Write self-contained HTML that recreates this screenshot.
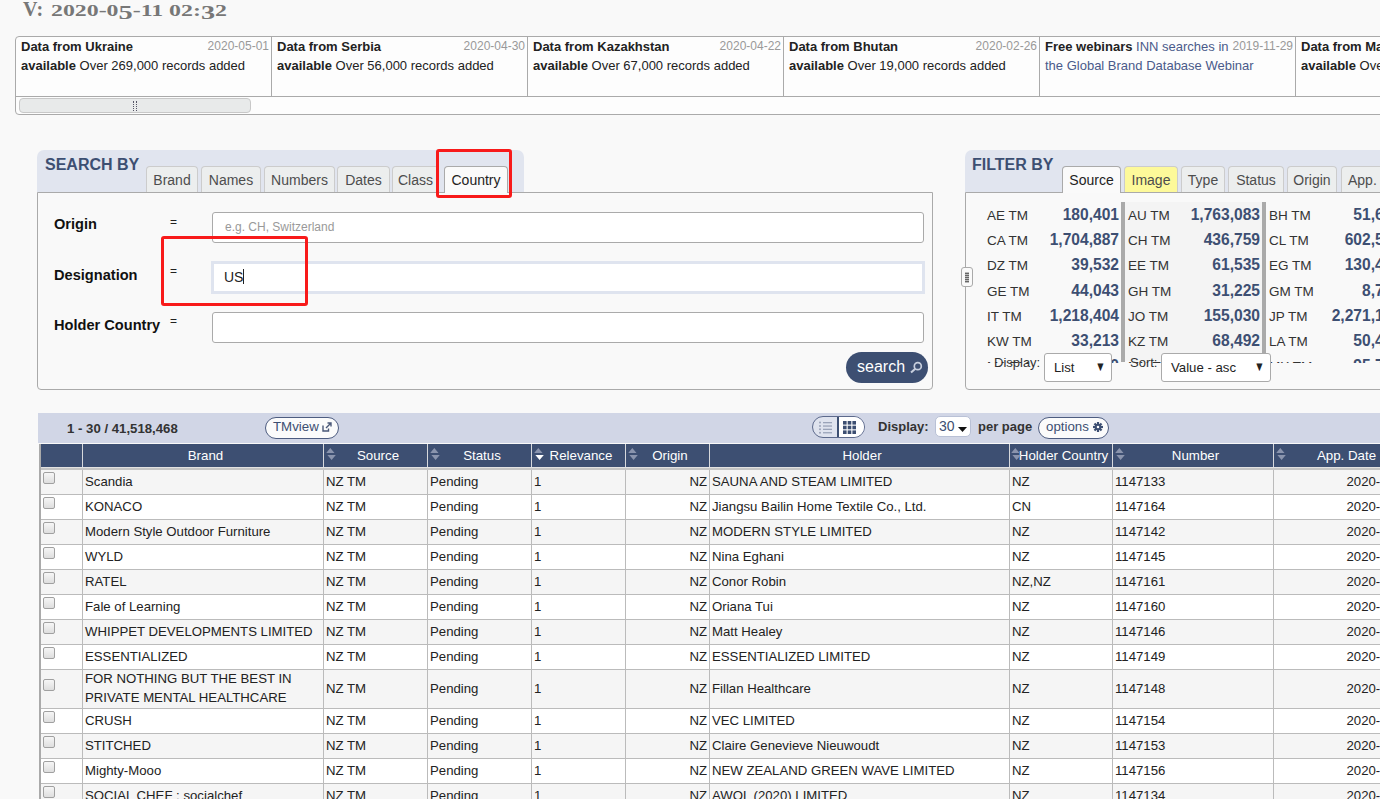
<!DOCTYPE html>
<html><head><meta charset="utf-8">
<style>
*{box-sizing:border-box;margin:0;padding:0}
html,body{width:1380px;height:799px;overflow:hidden;background:#f9f9f9;font-family:"Liberation Sans",sans-serif;color:#222;font-size:13px}
.abs{position:absolute}
#title{left:0;top:0;width:240px;height:24px;font-family:"Liberation Serif",serif;font-weight:bold;color:#777;white-space:nowrap}
#title .tv{position:absolute;left:23px;top:-1px;font-size:20px;line-height:20px;letter-spacing:1px}
#title .td{position:absolute;left:51px;top:2px;font-size:16px;line-height:16px;display:inline-block;transform:scaleX(1.49);transform-origin:0 0}
#title .td i{font-style:normal;position:relative;top:3px;font-size:19px}
/* news */
#news{left:15px;top:36px;width:1400px;height:79px;border:1px solid #aaa;border-radius:4px;background:#fdfdfd;overflow:hidden}
#news .items{position:absolute;left:0;top:0;height:60px;border-bottom:1px solid #aaa;width:1400px}
#news .it{position:absolute;top:0;width:256px;height:59px;border-right:1px solid #aaa;padding:0 0 0 5px;line-height:19.3px;white-space:nowrap}
#news .it b{font-weight:bold;color:#222}
#news .dt{position:absolute;right:2px;top:0;color:#999;font-size:12px}
#news a{color:#4a5a8a;text-decoration:none}
#news .thumb{position:absolute;left:3px;top:61px;width:232px;height:15px;border:1px solid #c8c8c8;border-radius:4px;background:#e8eaea}
#news .grip{position:absolute;left:113px;top:2px;width:4px;height:10px;border-left:1px dotted #556;border-right:1px dotted #556}
/* panels */
.phead{position:absolute;background:#e1e5ef;border-radius:7px 7px 0 0}
.phead h2{position:absolute;left:8px;top:6px;font-size:16px;font-weight:bold;color:#3d4f72;white-space:nowrap}
.tab{position:absolute;top:16px;height:26px;border:1px solid #ccc;border-bottom:none;border-radius:4px 4px 0 0;background:#eceeee;color:#4d4d4d;font-size:14px;text-align:center;line-height:27px;white-space:nowrap}
.tab.act{background:#fafafa;color:#222;height:27px;border-color:#aaa;z-index:2}
.pbody{position:absolute;border:1px solid #aaa;border-radius:0 0 4px 4px;background:#f9f9f9}
.lbl{position:absolute;font-size:14.6px;font-weight:bold;color:#111;white-space:nowrap}
.eq{position:absolute;font-size:12px;color:#222;margin-left:-2px}
.inp{position:absolute;left:174px;width:712px;height:30px;border:1px solid #aaa;border-radius:3px;background:#fff;font-size:12px;color:#999;padding:7px 0 0 12px}
.inp.foc{border:3px solid #dfe4ef;border-radius:0;color:#222;font-size:14px;padding:5px 0 0 10px}
.redbox{position:absolute;z-index:5;border:3px solid #f81a1a;border-radius:3px}
#sbtn{position:absolute;background:#3d4f72;color:#fff;border-radius:16px;font-size:16px;white-space:nowrap}
/* filter grid */
.fl{position:absolute;font-size:14px;color:#333;white-space:nowrap}
.fv{position:absolute;font-size:15px;font-weight:bold;color:#3d4f72;text-align:right;white-space:nowrap}
.sel{position:absolute;z-index:3;background:#fff;border:1px solid #aaa;border-radius:3px;font-size:13.2px;color:#222;padding:0 0 0 9px;line-height:28px;white-space:nowrap}
.sel i{position:absolute;right:4px;top:-1px;font-style:normal;font-size:13px;transform:scaleX(.8)}
/* results */
#tbar{left:38px;top:413px;width:1342px;height:30px;background:#d1d6e6}
#tbl{position:absolute;left:40px;top:443px;border-collapse:collapse;table-layout:fixed;background:#fff}
#tbl th{background:#3d4f72;color:#fff;font-weight:normal;font-size:14px;height:25px;border-left:1px solid #dfe3ea;border-top:1px solid #fff;position:relative;white-space:nowrap;overflow:hidden}
#tbl td{font-size:13px;color:#222;border:1px solid #bbb;height:25px;padding:0 2px;vertical-align:middle;white-space:nowrap;overflow:hidden}
#tbl tr:nth-child(odd) td{background:#f3f3f3}

.r{position:absolute;left:41px;width:1380px;border-bottom:1px solid #bbb;background:#fff}
.r.g{background:#f5f5f5}
.c{position:absolute;top:0;bottom:0;border-left:1px solid #bbb;padding:0 0 2px 2px;display:flex;align-items:center;line-height:19px;font-size:13.2px;color:#222;white-space:nowrap;overflow:hidden}

.c.rt{justify-content:flex-end;padding:0 2px 2px 0}
.cb{position:absolute;left:2px;top:2px;width:12px;height:12px;border:1px solid #a0a0a0;border-radius:2px;background:linear-gradient(#f6f6f6,#dedede)}
.t2 .cb{top:9px}
.c0{border-left:none}
#thead{position:absolute;left:41px;top:444px;width:1380px;height:26px;background:#3d4f72;border-bottom:3px solid #c4c4c4}
#thead:after{content:"";position:absolute;left:0;right:0;top:23px;height:1px;background:#e2e2e2}
.h{position:absolute;top:0;height:23px;border-left:1px solid #d6d8dc;color:#fff;font-size:13.3px;text-align:center;line-height:23px;white-space:nowrap;padding-left:5px}
.h .so{position:absolute;left:2px;top:4px}
#lborder{position:absolute;left:39px;top:444px;width:2px;height:360px;background:#aaa}

#fgrid{position:absolute;left:984px;top:202px;width:420px;height:161px;overflow:hidden}
.fcol{position:absolute;top:0;width:137px;height:159px}
.fr{position:absolute;left:0;width:137px;height:25.1px;line-height:25.1px}
.fl{position:absolute;left:3px;top:1px;font-size:13.5px;color:#333;white-space:nowrap}
.fv{position:absolute;right:2px;top:0;font-size:15.6px;font-weight:bold;color:#3d4f72;white-space:nowrap}
.fbar{position:absolute;top:0;width:4px;height:160px;background:#aaa}
.dlab{position:absolute;font-size:13px;color:#333;white-space:nowrap;z-index:2}
#splitter{position:absolute;left:-5px;top:74px;width:12px;height:20px;border:1px solid #aaa;border-radius:3px;background:#fafafa;z-index:3}
#splitter i{position:absolute;left:3px;top:4px;width:4px;height:11px;background:repeating-linear-gradient(#bbb 0 1px,#666 1px 2px)}

.tb{position:absolute;font-size:13px;color:#333;white-space:nowrap;line-height:15px}
.pill{position:absolute;top:4px;height:22px;border:1px solid #4d5c80;border-radius:11px;background:#fbfbfb;color:#3d4f72;font-size:13.3px;line-height:17px;padding-left:7px;white-space:nowrap}
#vtog{position:absolute;left:774px;top:3px;width:53px;height:22px;border:1px solid #5d6a8c;border-radius:11px;overflow:hidden;background:#dfe3ee}
#vtog .vl{position:absolute;left:0;top:0;width:25px;height:20px;padding:4px 0 0 5px}
#vtog .vg{position:absolute;left:24px;top:0;width:29px;height:20px;background:#fff;border-left:2px solid #3d4f72;padding:4px 0 0 4px}
#pp{position:absolute;left:897px;top:3px;width:36px;height:21px;background:#fff;border:1px solid #b9c1d6;border-radius:5px;color:#3d4f72;font-size:14px;line-height:18px;padding-left:3px}
</style></head><body>
<div id="title" class="abs"><span class="tv">V:</span><span class="td">2020-0<i>5</i>-11 02:<i>3</i>2</span></div>

<div id="news" class="abs">
 <div class="items">
  <div class="it" style="left:0"><b>Data from Ukraine</b><span class="dt">2020-05-01</span><br><b>available</b> Over 269,000 records added</div>
  <div class="it" style="left:256px"><b>Data from Serbia</b><span class="dt">2020-04-30</span><br><b>available</b> Over 56,000 records added</div>
  <div class="it" style="left:512px"><b>Data from Kazakhstan</b><span class="dt">2020-04-22</span><br><b>available</b> Over 67,000 records added</div>
  <div class="it" style="left:768px"><b>Data from Bhutan</b><span class="dt">2020-02-26</span><br><b>available</b> Over 19,000 records added</div>
  <div class="it" style="left:1024px"><b>Free webinars</b> <a>INN searches in</a><span class="dt">2019-11-29</span><br><a>the Global Brand Database Webinar</a></div>
  <div class="it" style="left:1280px"><b>Data from Malaysia</b><br><b>available</b> Over</div>
 </div>
 <div class="thumb"><div class="grip"></div></div>
</div>

<!-- SEARCH -->
<div class="phead" style="left:37px;top:150px;width:487px;height:43px">
 <h2>SEARCH BY</h2>
 <div class="tab" style="left:109px;width:52px">Brand</div>
 <div class="tab" style="left:164px;width:60px">Names</div>
 <div class="tab" style="left:227px;width:71px">Numbers</div>
 <div class="tab" style="left:300px;width:53px">Dates</div>
 <div class="tab" style="left:355px;width:47px">Class</div>
 <div class="tab act" style="left:407px;width:64px">Country</div>
</div>
<div class="pbody" style="left:37px;top:192px;width:896px;height:198px">
 <div class="lbl" style="left:16px;top:23px">Origin</div>
 <div class="eq" style="left:134px;top:22px">=</div>
 <div class="inp" style="top:19px;height:31px">e.g. CH, Switzerland</div>
 <div class="lbl" style="left:16px;top:74px">Designation</div>
 <div class="eq" style="left:134px;top:71px">=</div>
 <div class="inp foc" style="top:68px;height:33px;left:173px;width:714px">US<span style="display:inline-block;width:1px;height:15px;background:#222;vertical-align:-2px"></span></div>
 <div class="lbl" style="left:16px;top:124px">Holder Country</div>
 <div class="eq" style="left:134px;top:121px">=</div>
 <div class="inp" style="top:119px;height:31px"></div>
 <div id="sbtn" style="left:808px;top:159px;width:82px;height:31px;padding:6px 0 0 11px">search<svg width="14" height="13" viewBox="0 0 14 13" style="position:absolute;left:63px;top:9px"><circle cx="8.8" cy="5.2" r="3.5" fill="none" stroke="#c8cfdd" stroke-width="1.7"/><line x1="6.3" y1="7.7" x2="2" y2="11.5" stroke="#c8cfdd" stroke-width="2.1"/></svg></div>
</div>
<div class="redbox" style="left:436px;top:149px;width:76px;height:49px"></div>
<div class="redbox" style="left:161px;top:236px;width:147px;height:70px"></div>

<!-- FILTER -->
<div class="phead" style="left:965px;top:150px;width:430px;height:43px">
 <h2 style="left:7px">FILTER BY</h2>
 <div class="tab act" style="left:97px;width:59px">Source</div>
 <div class="tab" style="left:159px;width:54px;background:#fdf99a">Image</div>
 <div class="tab" style="left:216px;width:44px">Type</div>
 <div class="tab" style="left:263px;width:56px">Status</div>
 <div class="tab" style="left:322px;width:50px">Origin</div>
 <div class="tab" style="left:376px;width:50px;text-align:left;padding-left:6px">App.</div>
</div>
<div class="pbody" style="left:965px;top:192px;width:430px;height:198px">

 <div class="dlab" style="left:28px;top:162px">Display:</div>
 <div class="sel" style="left:78px;top:160px;width:68px;height:29px">List<i>&#9660;</i></div>
 <div class="dlab" style="left:164px;top:162px">Sort:</div>
 <div class="sel" style="left:195px;top:160px;width:110px;height:29px">Value - asc<i>&#9660;</i></div>
 <div id="splitter"><i></i></div>
</div>
<div id="fgrid">
<div class="fcol" style="left:0px;">
<div class="fr" style="top:0.25px"><span class="fl">AE TM</span><span class="fv">180,401</span></div>
<div class="fr" style="top:25.35px"><span class="fl">CA TM</span><span class="fv">1,704,887</span></div>
<div class="fr" style="top:50.45px"><span class="fl">DZ TM</span><span class="fv">39,532</span></div>
<div class="fr" style="top:75.55px"><span class="fl">GE TM</span><span class="fv">44,043</span></div>
<div class="fr" style="top:100.65px"><span class="fl">IT TM</span><span class="fv">1,218,404</span></div>
<div class="fr" style="top:125.75px"><span class="fl">KW TM</span><span class="fv">33,213</span></div>
<div class="fr" style="top:150.85px"><span class="fl">MA TM</span><span class="fv">1,047,520</span></div>
</div>
<div class="fcol" style="left:141px;background:#f4f4f4;">
<div class="fr" style="top:0.25px"><span class="fl">AU TM</span><span class="fv">1,763,083</span></div>
<div class="fr" style="top:25.35px"><span class="fl">CH TM</span><span class="fv">436,759</span></div>
<div class="fr" style="top:50.45px"><span class="fl">EE TM</span><span class="fv">61,535</span></div>
<div class="fr" style="top:75.55px"><span class="fl">GH TM</span><span class="fv">31,225</span></div>
<div class="fr" style="top:100.65px"><span class="fl">JO TM</span><span class="fv">155,030</span></div>
<div class="fr" style="top:125.75px"><span class="fl">KZ TM</span><span class="fv">68,492</span></div>
<div class="fr" style="top:150.85px"><span class="fl">MN TM</span><span class="fv">26,513</span></div>
</div>
<div class="fcol" style="left:282px;">
<div class="fr" style="top:0.25px"><span class="fl">BH TM</span><span class="fv">51,689</span></div>
<div class="fr" style="top:25.35px"><span class="fl">CL TM</span><span class="fv">602,558</span></div>
<div class="fr" style="top:50.45px"><span class="fl">EG TM</span><span class="fv">130,424</span></div>
<div class="fr" style="top:75.55px"><span class="fl">GM TM</span><span class="fv">8,742</span></div>
<div class="fr" style="top:100.65px"><span class="fl">JP TM</span><span class="fv">2,271,198</span></div>
<div class="fr" style="top:125.75px"><span class="fl">LA TM</span><span class="fv">50,432</span></div>
<div class="fr" style="top:150.85px"><span class="fl">MX TM</span><span class="fv">95,712</span></div>
</div>
<div class="fbar" style="left:137px"></div><div class="fbar" style="left:278px"></div>
</div>

<!-- RESULTS -->
<div id="tbar" class="abs">
 <div class="tb" style="left:29px;top:8px;font-weight:bold;font-size:13.2px">1 - 30 / 41,518,468</div>
 <div class="pill" style="left:227px;width:74px">TMview<svg width="10" height="10" viewBox="0 0 10 10" style="position:absolute;left:56px;top:4px"><path d="M1 3.5v5.5h5.5V6.5" fill="none" stroke="#4a5878" stroke-width="1.4"/><path d="M4 6L8.5 1.5M5.5 1H9v3.5" fill="none" stroke="#4a5878" stroke-width="1.4"/></svg></div>
 <div id="vtog"><div class="vl"><svg width="14" height="13" viewBox="0 0 14 13"><g fill="#9aa3b8"><circle cx="2" cy="1.5" r="1"/><circle cx="2" cy="5" r="1"/><circle cx="2" cy="8.3" r="1"/><circle cx="2" cy="11.7" r="1"/><rect x="5" y="1" width="9" height="1.3"/><rect x="5" y="4.4" width="9" height="1.3"/><rect x="5" y="7.7" width="9" height="1.3"/><rect x="5" y="11.1" width="9" height="1.3"/></g></svg></div><div class="vg"><svg width="13" height="13" viewBox="0 0 13 13"><g fill="#3d4f72"><rect x="0" y="0" width="3.6" height="3.6"/><rect x="4.7" y="0" width="3.6" height="3.6"/><rect x="9.4" y="0" width="3.6" height="3.6"/><rect x="0" y="4.7" width="3.6" height="3.6"/><rect x="4.7" y="4.7" width="3.6" height="3.6"/><rect x="9.4" y="4.7" width="3.6" height="3.6"/><rect x="0" y="9.4" width="3.6" height="3.6"/><rect x="4.7" y="9.4" width="3.6" height="3.6"/><rect x="9.4" y="9.4" width="3.6" height="3.6"/></g></svg></div></div>
 <div class="tb" style="left:840px;top:6px;font-weight:bold">Display:</div>
 <div id="pp"><span>30</span><svg width="9" height="6" viewBox="0 0 9 6" style="position:absolute;left:22px;top:10px"><path d="M0 0h9L4.5 5z" fill="#111"/></svg></div>
 <div class="tb" style="left:940px;top:6px;font-weight:bold">per page</div>
 <div class="pill" style="left:1000px;width:71px;top:4px">options <svg width="10" height="10" viewBox="0 0 11 11" style="vertical-align:-1px"><g fill="#3d4f72"><circle cx="5.5" cy="5.5" r="3.6"/><rect x="4.3" y="0" width="2.4" height="11"/><rect x="0" y="4.3" width="11" height="2.4"/><rect x="4.3" y="0" width="2.4" height="11" transform="rotate(45 5.5 5.5)"/><rect x="4.3" y="0" width="2.4" height="11" transform="rotate(-45 5.5 5.5)"/></g><circle cx="5.5" cy="5.5" r="1.4" fill="#fff"/></svg></div>
</div>

<div id="thead">
 <div class="h" style="left:0;width:41px;border-left:none"></div>
 <div class="h" style="left:41px;width:241px">Brand</div>
 <div class="h" style="left:282px;width:104px"><svg class="so" width="10" height="14" viewBox="0 0 10 14"><path d="M4.3 0L8.5 5H0.2z M5.6 12L9.8 7H1.4z" fill="#8a94ad"/></svg>Source</div>
 <div class="h" style="left:386px;width:104px"><svg class="so" width="10" height="14" viewBox="0 0 10 14"><path d="M4.3 0L8.5 5H0.2z M5.6 12L9.8 7H1.4z" fill="#8a94ad"/></svg>Status</div>
 <div class="h" style="left:490px;width:94px"><svg class="so" width="10" height="14" viewBox="0 0 10 14"><path d="M4.3 0L8.5 5H0.2z" fill="#8a94ad"/><path d="M5.6 12L9.8 7H1.4z" fill="#fff"/></svg>Relevance</div>
 <div class="h" style="left:584px;width:84px"><svg class="so" width="10" height="14" viewBox="0 0 10 14"><path d="M4.3 0L8.5 5H0.2z M5.6 12L9.8 7H1.4z" fill="#8a94ad"/></svg>Origin</div>
 <div class="h" style="left:668px;width:300px">Holder</div>
 <div class="h" style="left:968px;width:103px"><svg class="so" style="left:1px" width="10" height="14" viewBox="0 0 10 14"><path d="M4.3 0L8.5 5H0.2z M5.6 12L9.8 7H1.4z" fill="#8a94ad"/></svg>Holder Country</div>
 <div class="h" style="left:1071px;width:161px"><svg class="so" width="10" height="14" viewBox="0 0 10 14"><path d="M4.3 0L8.5 5H0.2z M5.6 12L9.8 7H1.4z" fill="#8a94ad"/></svg>Number</div>
 <div class="h" style="left:1232px;width:141px"><svg class="so" width="10" height="14" viewBox="0 0 10 14"><path d="M4.3 0L8.5 5H0.2z M5.6 12L9.8 7H1.4z" fill="#8a94ad"/></svg>App. Date</div>
</div>
<div id="rows">
<div class="r g" style="top:470px;height:25px"><div class="c c0" style="left:0px;width:41px"><i class="cb"></i></div><div class="c" style="left:41px;width:241px">Scandia</div><div class="c" style="left:282px;width:104px">NZ TM</div><div class="c" style="left:386px;width:104px">Pending</div><div class="c" style="left:490px;width:94px">1</div><div class="c rt" style="left:584px;width:84px">NZ</div><div class="c" style="left:668px;width:300px">SAUNA AND STEAM LIMITED</div><div class="c" style="left:968px;width:103px">NZ</div><div class="c" style="left:1071px;width:161px">1147133</div><div class="c rt" style="left:1232px;width:143px">2020-05-06</div></div>
<div class="r" style="top:495px;height:25px"><div class="c c0" style="left:0px;width:41px"><i class="cb"></i></div><div class="c" style="left:41px;width:241px">KONACO</div><div class="c" style="left:282px;width:104px">NZ TM</div><div class="c" style="left:386px;width:104px">Pending</div><div class="c" style="left:490px;width:94px">1</div><div class="c rt" style="left:584px;width:84px">NZ</div><div class="c" style="left:668px;width:300px">Jiangsu Bailin Home Textile Co., Ltd.</div><div class="c" style="left:968px;width:103px">CN</div><div class="c" style="left:1071px;width:161px">1147164</div><div class="c rt" style="left:1232px;width:143px">2020-05-06</div></div>
<div class="r g" style="top:520px;height:25px"><div class="c c0" style="left:0px;width:41px"><i class="cb"></i></div><div class="c" style="left:41px;width:241px">Modern Style Outdoor Furniture</div><div class="c" style="left:282px;width:104px">NZ TM</div><div class="c" style="left:386px;width:104px">Pending</div><div class="c" style="left:490px;width:94px">1</div><div class="c rt" style="left:584px;width:84px">NZ</div><div class="c" style="left:668px;width:300px">MODERN STYLE LIMITED</div><div class="c" style="left:968px;width:103px">NZ</div><div class="c" style="left:1071px;width:161px">1147142</div><div class="c rt" style="left:1232px;width:143px">2020-05-06</div></div>
<div class="r" style="top:545px;height:25px"><div class="c c0" style="left:0px;width:41px"><i class="cb"></i></div><div class="c" style="left:41px;width:241px">WYLD</div><div class="c" style="left:282px;width:104px">NZ TM</div><div class="c" style="left:386px;width:104px">Pending</div><div class="c" style="left:490px;width:94px">1</div><div class="c rt" style="left:584px;width:84px">NZ</div><div class="c" style="left:668px;width:300px">Nina Eghani</div><div class="c" style="left:968px;width:103px">NZ</div><div class="c" style="left:1071px;width:161px">1147145</div><div class="c rt" style="left:1232px;width:143px">2020-05-06</div></div>
<div class="r g" style="top:570px;height:25px"><div class="c c0" style="left:0px;width:41px"><i class="cb"></i></div><div class="c" style="left:41px;width:241px">RATEL</div><div class="c" style="left:282px;width:104px">NZ TM</div><div class="c" style="left:386px;width:104px">Pending</div><div class="c" style="left:490px;width:94px">1</div><div class="c rt" style="left:584px;width:84px">NZ</div><div class="c" style="left:668px;width:300px">Conor Robin</div><div class="c" style="left:968px;width:103px">NZ,NZ</div><div class="c" style="left:1071px;width:161px">1147161</div><div class="c rt" style="left:1232px;width:143px">2020-05-06</div></div>
<div class="r" style="top:595px;height:25px"><div class="c c0" style="left:0px;width:41px"><i class="cb"></i></div><div class="c" style="left:41px;width:241px">Fale of Learning</div><div class="c" style="left:282px;width:104px">NZ TM</div><div class="c" style="left:386px;width:104px">Pending</div><div class="c" style="left:490px;width:94px">1</div><div class="c rt" style="left:584px;width:84px">NZ</div><div class="c" style="left:668px;width:300px">Oriana Tui</div><div class="c" style="left:968px;width:103px">NZ</div><div class="c" style="left:1071px;width:161px">1147160</div><div class="c rt" style="left:1232px;width:143px">2020-05-06</div></div>
<div class="r g" style="top:620px;height:25px"><div class="c c0" style="left:0px;width:41px"><i class="cb"></i></div><div class="c" style="left:41px;width:241px">WHIPPET DEVELOPMENTS LIMITED</div><div class="c" style="left:282px;width:104px">NZ TM</div><div class="c" style="left:386px;width:104px">Pending</div><div class="c" style="left:490px;width:94px">1</div><div class="c rt" style="left:584px;width:84px">NZ</div><div class="c" style="left:668px;width:300px">Matt Healey</div><div class="c" style="left:968px;width:103px">NZ</div><div class="c" style="left:1071px;width:161px">1147146</div><div class="c rt" style="left:1232px;width:143px">2020-05-06</div></div>
<div class="r" style="top:645px;height:25px"><div class="c c0" style="left:0px;width:41px"><i class="cb"></i></div><div class="c" style="left:41px;width:241px">ESSENTIALIZED</div><div class="c" style="left:282px;width:104px">NZ TM</div><div class="c" style="left:386px;width:104px">Pending</div><div class="c" style="left:490px;width:94px">1</div><div class="c rt" style="left:584px;width:84px">NZ</div><div class="c" style="left:668px;width:300px">ESSENTIALIZED LIMITED</div><div class="c" style="left:968px;width:103px">NZ</div><div class="c" style="left:1071px;width:161px">1147149</div><div class="c rt" style="left:1232px;width:143px">2020-05-06</div></div>
<div class="r g t2" style="top:670px;height:39px"><div class="c c0" style="left:0px;width:41px"><i class="cb"></i></div><div class="c" style="left:41px;width:241px">FOR NOTHING BUT THE BEST IN<br>PRIVATE MENTAL HEALTHCARE</div><div class="c" style="left:282px;width:104px">NZ TM</div><div class="c" style="left:386px;width:104px">Pending</div><div class="c" style="left:490px;width:94px">1</div><div class="c rt" style="left:584px;width:84px">NZ</div><div class="c" style="left:668px;width:300px">Fillan Healthcare</div><div class="c" style="left:968px;width:103px">NZ</div><div class="c" style="left:1071px;width:161px">1147148</div><div class="c rt" style="left:1232px;width:143px">2020-05-06</div></div>
<div class="r" style="top:709px;height:25px"><div class="c c0" style="left:0px;width:41px"><i class="cb"></i></div><div class="c" style="left:41px;width:241px">CRUSH</div><div class="c" style="left:282px;width:104px">NZ TM</div><div class="c" style="left:386px;width:104px">Pending</div><div class="c" style="left:490px;width:94px">1</div><div class="c rt" style="left:584px;width:84px">NZ</div><div class="c" style="left:668px;width:300px">VEC LIMITED</div><div class="c" style="left:968px;width:103px">NZ</div><div class="c" style="left:1071px;width:161px">1147154</div><div class="c rt" style="left:1232px;width:143px">2020-05-06</div></div>
<div class="r g" style="top:734px;height:25px"><div class="c c0" style="left:0px;width:41px"><i class="cb"></i></div><div class="c" style="left:41px;width:241px">STITCHED</div><div class="c" style="left:282px;width:104px">NZ TM</div><div class="c" style="left:386px;width:104px">Pending</div><div class="c" style="left:490px;width:94px">1</div><div class="c rt" style="left:584px;width:84px">NZ</div><div class="c" style="left:668px;width:300px">Claire Genevieve Nieuwoudt</div><div class="c" style="left:968px;width:103px">NZ</div><div class="c" style="left:1071px;width:161px">1147153</div><div class="c rt" style="left:1232px;width:143px">2020-05-06</div></div>
<div class="r" style="top:759px;height:25px"><div class="c c0" style="left:0px;width:41px"><i class="cb"></i></div><div class="c" style="left:41px;width:241px">Mighty-Mooo</div><div class="c" style="left:282px;width:104px">NZ TM</div><div class="c" style="left:386px;width:104px">Pending</div><div class="c" style="left:490px;width:94px">1</div><div class="c rt" style="left:584px;width:84px">NZ</div><div class="c" style="left:668px;width:300px">NEW ZEALAND GREEN WAVE LIMITED</div><div class="c" style="left:968px;width:103px">NZ</div><div class="c" style="left:1071px;width:161px">1147156</div><div class="c rt" style="left:1232px;width:143px">2020-05-06</div></div>
<div class="r g" style="top:784px;height:25px"><div class="c c0" style="left:0px;width:41px"><i class="cb"></i></div><div class="c" style="left:41px;width:241px">SOCIAL CHEF : socialchef</div><div class="c" style="left:282px;width:104px">NZ TM</div><div class="c" style="left:386px;width:104px">Pending</div><div class="c" style="left:490px;width:94px">1</div><div class="c rt" style="left:584px;width:84px">NZ</div><div class="c" style="left:668px;width:300px">AWOL (2020) LIMITED</div><div class="c" style="left:968px;width:103px">NZ</div><div class="c" style="left:1071px;width:161px">1147134</div><div class="c rt" style="left:1232px;width:143px">2020-05-06</div></div>
</div>
<div id="lborder"></div>
</body></html>
